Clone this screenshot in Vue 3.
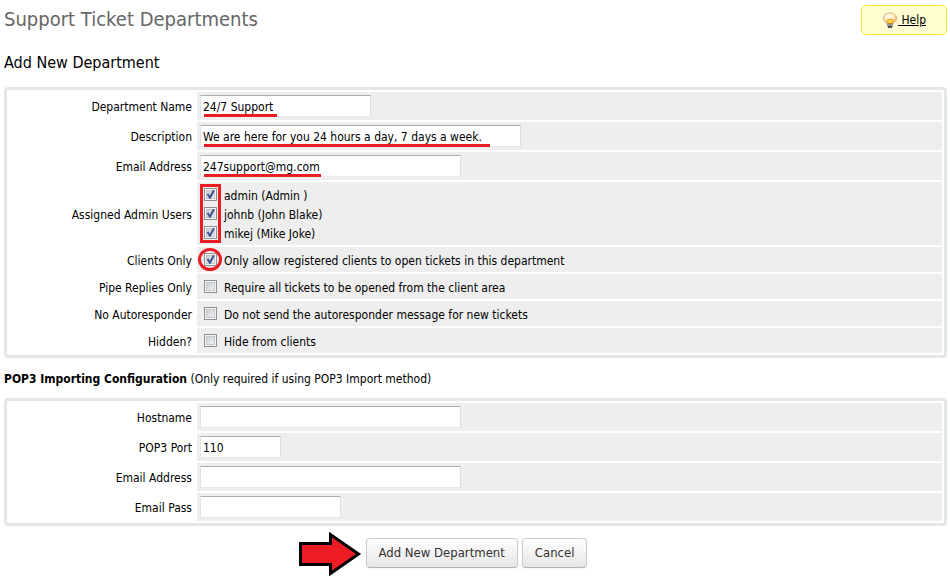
<script setup>
import { reactive } from 'vue'

const form = reactive({
  name: '24/7 Support',
  description: 'We are here for you 24 hours a day, 7 days a week.',
  email: '247support@mg.com',
  host: '',
  port: '110',
  popEmail: '',
  popPass: '',
})

const details = [
  { key: 'name', label: 'Department Name', size: 'm', mark: 'mark-name' },
  { key: 'description', label: 'Description', size: 'xl', mark: 'mark-description' },
  { key: 'email', label: 'Email Address', size: 'l', mark: 'mark-email' },
]

const admins = reactive([
  { id: 'admin', label: 'admin (Admin )', on: true },
  { id: 'johnb', label: 'johnb (John Blake)', on: true },
  { id: 'mikej', label: 'mikej (Mike Joke)', on: true },
])

const options = reactive([
  { id: 'clients', title: 'Clients Only', label: 'Only allow registered clients to open tickets in this department', on: true, ring: true },
  { id: 'pipe', title: 'Pipe Replies Only', label: 'Require all tickets to be opened from the client area', on: false },
  { id: 'noauto', title: 'No Autoresponder', label: 'Do not send the autoresponder message for new tickets', on: false },
  { id: 'hidden', title: 'Hidden?', label: 'Hide from clients', on: false },
])

const pop3 = [
  { key: 'host', label: 'Hostname', size: 'l', type: 'text' },
  { key: 'port', label: 'POP3 Port', size: 'xs', type: 'text' },
  { key: 'popEmail', label: 'Email Address', size: 'l', type: 'text' },
  { key: 'popPass', label: 'Email Pass', size: 's', type: 'password' },
]
</script>

<template>
  <main class="page">
    <header class="top">
      <h1>Support Ticket Departments</h1>
      <a class="help" href="#help">
        <svg class="bulb" width="16" height="16" viewBox="0 0 16 16" aria-hidden="true">
          <defs>
            <radialGradient id="glow" cx="0.4" cy="0.3" r="0.75">
              <stop offset="0" stop-color="#fffef2" />
              <stop offset="0.55" stop-color="#fde9b4" />
              <stop offset="1" stop-color="#f0a63c" />
            </radialGradient>
          </defs>
          <path d="M8 .9C4.400.9 1.500 3.200 1.500 6.200c0 2.200 1.400 3.500 2.700 4.500.6.500.8.9.9 1.500h5.800c.1-.6.3-1 .9-1.500 1.300-1 2.700-2.300 2.700-4.500 0-3-2.900-5.300-6.500-5.300z" fill="url(#glow)" stroke="#dfa98a" stroke-width="1" />
          <path d="M5.500 7.500h5l-.5 4h-4z" fill="#ffdc3c" stroke="#eba31c" stroke-width="1" />
          <path d="M5 11.500h6v2.500l-1.500 1.500h-3L5 14z" fill="#777" />
          <path d="M5 13h6" stroke="#bbb" stroke-width="1" />
          <path d="M6 15h4" stroke="#333" stroke-width="1.500" />
        </svg><span>&nbsp;Help</span>
      </a>
    </header>

    <h2>Add New Department</h2>

    <form @submit.prevent>
      <div class="panel">
        <div v-for="f in details" :key="f.key" class="row">
          <label class="title" :for="f.key">{{ f.label }}</label>
          <div class="cell">
            <input :id="f.key" v-model="form[f.key]" type="text" class="text" :class="f.size" />
            <span class="mark" :class="f.mark"></span>
          </div>
        </div>

        <div class="row" role="group" aria-labelledby="admins-title">
          <span id="admins-title" class="title">Assigned Admin Users</span>
          <div class="cell stack">
            <label v-for="a in admins" :key="a.id" class="choice">
              <input v-model="a.on" type="checkbox" class="box" />{{ a.label }}
            </label>
            <span class="frame"></span>
          </div>
        </div>

        <div v-for="o in options" :key="o.id" class="row">
          <label class="title" :for="o.id">{{ o.title }}</label>
          <div class="cell">
            <label class="choice">
              <input :id="o.id" v-model="o.on" type="checkbox" class="box" />{{ o.label }}
            </label>
            <span v-if="o.ring" class="ring"></span>
          </div>
        </div>
      </div>

      <p class="note"><b>POP3 Importing Configuration</b> (Only required if using POP3 Import method)</p>

      <div class="panel">
        <div v-for="f in pop3" :key="f.key" class="row">
          <label class="title" :for="f.key">{{ f.label }}</label>
          <div class="cell">
            <input :id="f.key" v-model="form[f.key]" :type="f.type" class="text" :class="f.size" />
          </div>
        </div>
      </div>

      <div class="actions">
        <svg class="arrow" width="64" height="46" viewBox="0 0 64 46" aria-hidden="true">
          <path d="M2.500 13.500h30v-9L60.500 24l-28 19.500v-9h-30z" fill="#ed1c24" stroke="#000" stroke-width="3" />
        </svg>
        <button type="submit">Add New Department</button>
        <button type="button">Cancel</button>
      </div>
    </form>
  </main>
</template>

<style>
body {
  margin: 0;
  background: #fff;
}
</style>

<style scoped>
.page {
  padding: 5px 3px 8px 4px;
  font-family: Tahoma, "DejaVu Sans Condensed", "DejaVu Sans", sans-serif;
  font-size: 12px;
  line-height: 16px;
  color: #000;
}
.top {
  display: flex;
  justify-content: space-between;
  align-items: flex-start;
}
h1 {
  margin: 0;
  font-size: 20px;
  line-height: 28px;
  font-weight: 400;
  color: #666;
}
.help {
  box-sizing: border-box;
  width: 86px;
  height: 30px;
  display: flex;
  align-items: center;
  justify-content: center;
  background: #ffffd2;
  border: 1px solid #fbe92e;
  border-radius: 5px;
  color: #000;
  text-decoration: none;
}
.help span {
  text-decoration: underline;
}
h2 {
  margin: 17px 0 13px;
  font-size: 16px;
  line-height: 22px;
  font-weight: 400;
}
.panel {
  display: grid;
  gap: 2px;
  padding: 2px;
  border: 3px solid #e2e7e9;
  border-radius: 4px;
}
.row {
  display: grid;
  grid-template-columns: 186px 1fr;
  gap: 2px;
}
.title {
  align-self: center;
  padding: 2px 3px 0 0;
  text-align: right;
}
.cell {
  position: relative;
  display: flex;
  align-items: center;
  padding: 3px;
  background: #eee;
}
.text {
  box-sizing: border-box;
  height: 22px;
  max-width: 100%;
  margin: 0;
  padding: 2px 2px 0;
  border: 1px solid #e3e9ef;
  border-top-color: #abadb3;
  border-left-color: #e2e3ea;
  border-right-color: #dbdfe6;
  border-radius: 1px;
  background: #fff;
  font: inherit;
  color: #000;
  outline: none;
}
.xs { width: 81px; }
.s { width: 141px; }
.m { width: 171px; }
.l { width: 261px; }
.xl { width: 321px; }
.stack {
  flex-direction: column;
  align-items: flex-start;
}
.choice {
  display: flex;
  align-items: flex-start;
  gap: 7px;
  height: 19px;
  padding: 0 4px;
  line-height: 22px;
}
.box {
  appearance: none;
  position: relative;
  box-sizing: border-box;
  flex: none;
  width: 13px;
  height: 13px;
  margin: 3px 0 0;
  border: 1px solid #8e8f8f;
  background: linear-gradient(135deg, #c5cad2, #f6f6f6) padding-box;
  box-shadow: inset 0 0 0 1px #f4f4f4, inset 0 0 0 2px #c3c6cb;
}
.box:checked::after {
  content: "";
  position: absolute;
  inset: 1px;
  background: #3f5494;
  clip-path: polygon(8% 48%, 28% 40%, 42% 64%, 76% 0, 98% 6%, 52% 98%, 36% 98%);
}
.mark {
  position: absolute;
  left: 7px;
  bottom: 3px;
  height: 3px;
  background: #ed1c24;
}
.mark-name { width: 73px; }
.mark-description { width: 286px; }
.mark-email { width: 117px; }
.frame {
  position: absolute;
  box-sizing: border-box;
  left: 3px;
  top: 2px;
  bottom: 2px;
  width: 21px;
  border: 3px solid #ed1c24;
}
.ring {
  position: absolute;
  box-sizing: border-box;
  left: 1px;
  top: 1px;
  width: 24px;
  height: 23px;
  border: 3px solid #ed1c24;
  border-radius: 50%;
}
.note {
  margin: 13px 0 11px;
}
.actions {
  display: flex;
  justify-content: center;
  align-items: center;
  gap: 4px;
  padding-right: 66px;
  margin-top: 4px;
}
button {
  height: 30px;
  margin: 0;
  padding: 0 12px;
  border: 1px solid #ccc;
  border-bottom-color: #b3b3b3;
  border-radius: 4px;
  background: linear-gradient(#fff, #e6e6e6);
  box-shadow: 0 1px 2px rgba(0, 0, 0, 0.05);
  font-family: inherit;
  font-size: 13px;
  line-height: 18px;
  color: #333;
}
</style>
